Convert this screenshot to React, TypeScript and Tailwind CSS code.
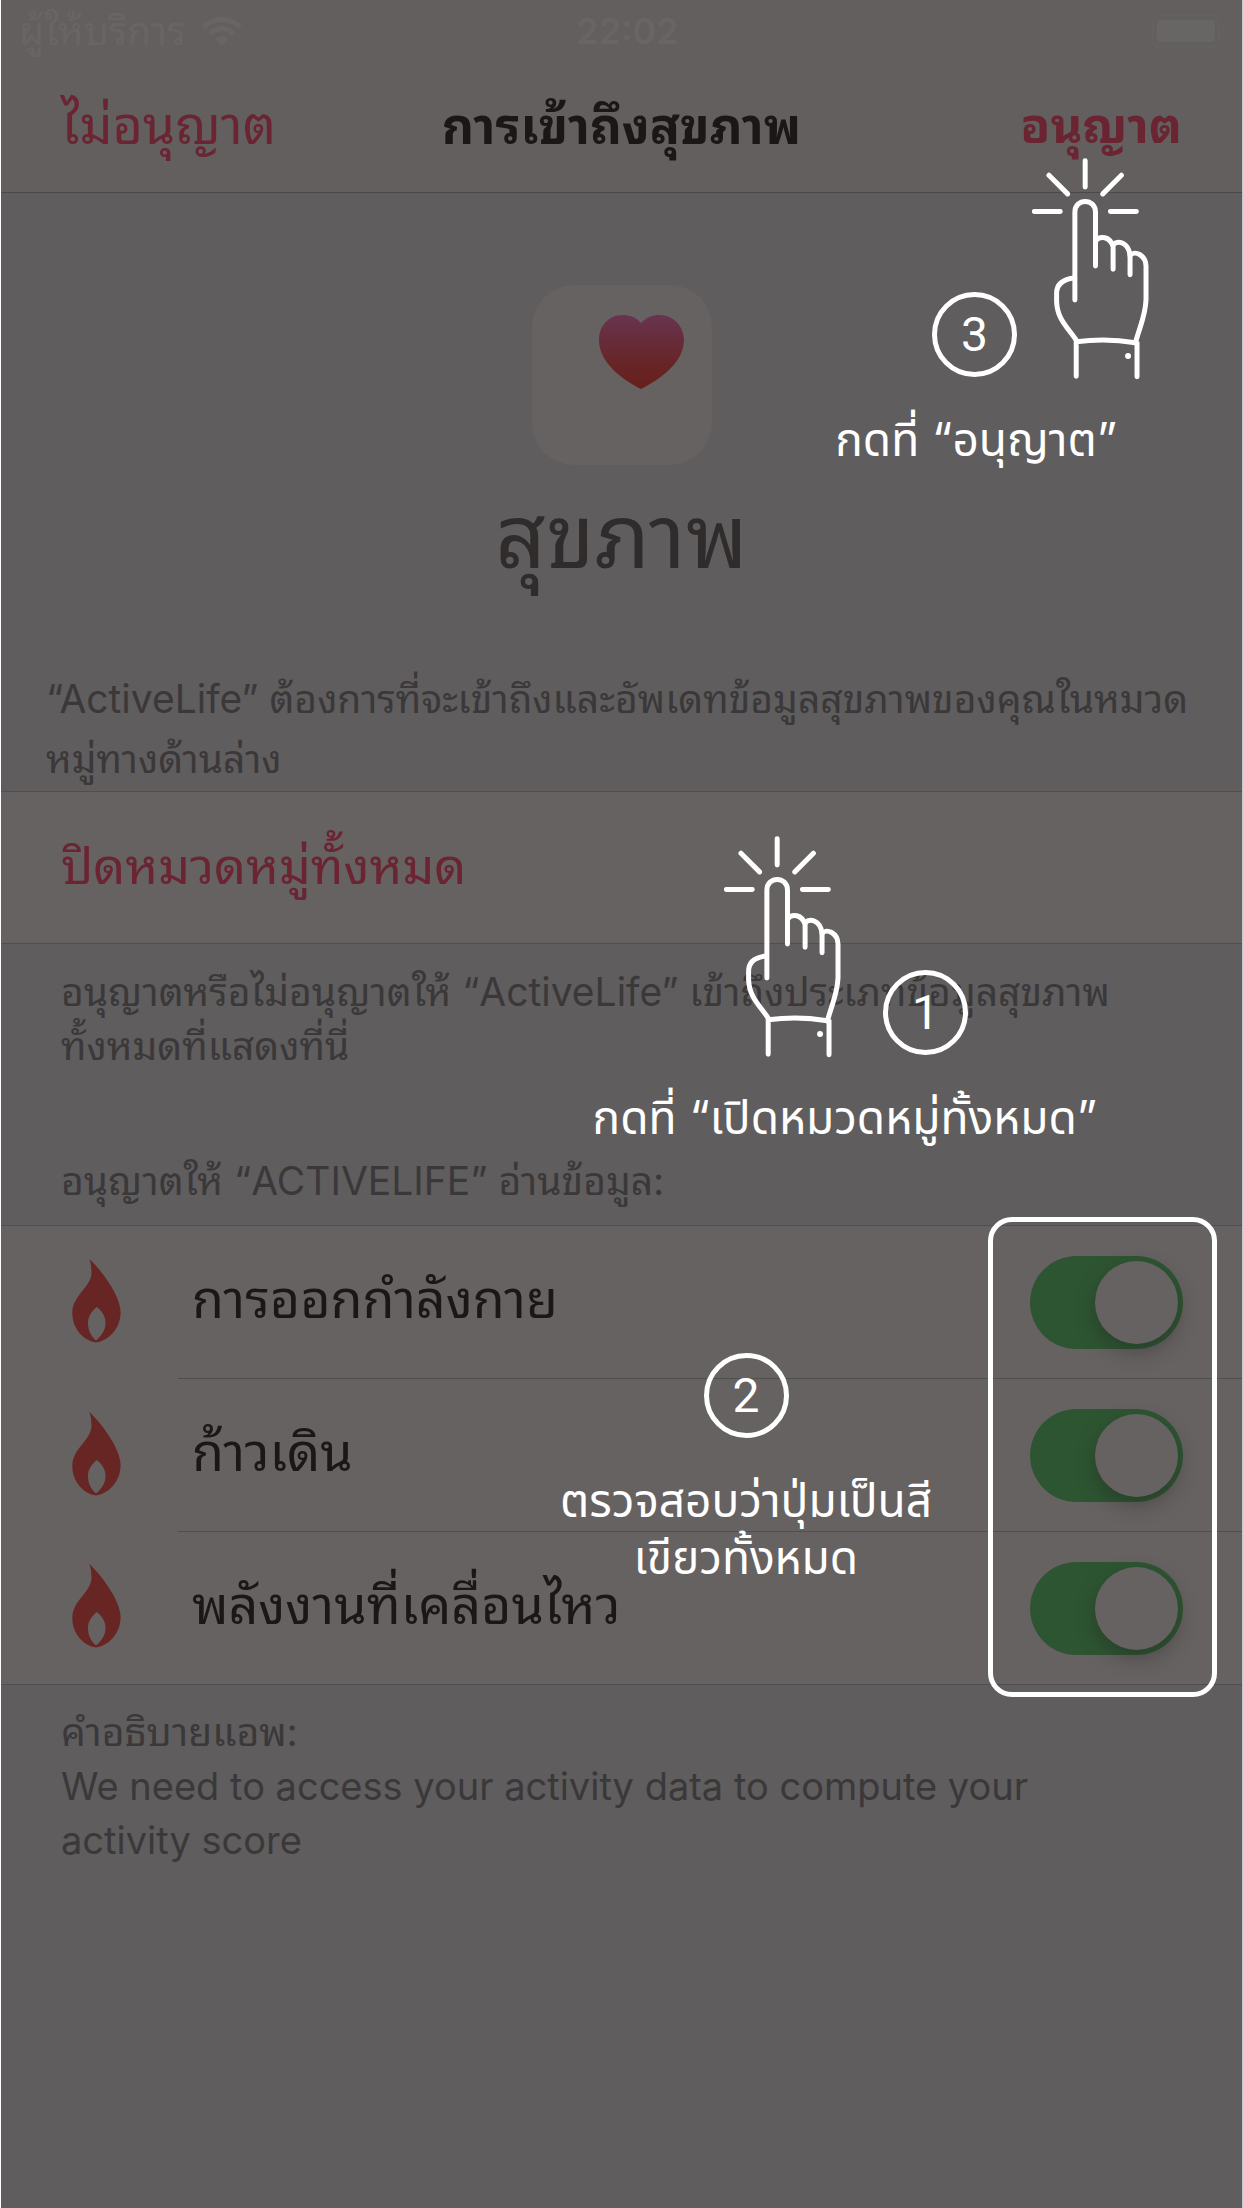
import React, { useId, useState } from 'react';

function TapHand({ className }: { className: string }) {
  return (
    <svg
      viewBox="636 84 352 666"
      className={`pointer-events-none absolute h-[222px] w-[117px] ${className}`}
      fill="none"
      stroke="white"
      strokeWidth="15"
      strokeLinecap="round"
      aria-hidden="true"
    >
      <path d="M796 91V170M687 135L743 191M905 135L849 191M643 244H721M872 244H950" />
      <path d="M765 510V246C765 203 827 203 827 246V408" />
      <path d="M828 332C840 316 871 318 880 350V418" />
      <path d="M880 344C894 330 926 336 931 376V434" />
      <path d="M931 376C945 360 978 374 979 408V510C977 560 960 590 947 640" />
      <path d="M762 444C730 448 710 462 710 490V515C712 570 745 594 771 634" />
      <path d="M769 740V636Q860 624 947 639L952 641V741" />
      <circle cx="925" cy="679" r="9" fill="white" stroke="none" />
    </svg>
  );
}

function StepNumber({ n }: { n: number }) {
  return (
    <span className="flex size-[85px] items-center justify-center rounded-full border-[5px] border-white font-['Roboto','Liberation_Sans',sans-serif] text-[48px] leading-none text-white">
      {n}
    </span>
  );
}

function Flame() {
  return (
    <svg viewBox="0 0 49 84" className="h-[84px] w-[49px] shrink-0" aria-hidden="true">
      <path
        fill="#672624"
        fillRule="evenodd"
        d="M17.5 0C32 14 48.6 38 48.6 53C48.6 70 36 82 24 83.5C12 82 0.3 70 0.3 54C0.3 36 20 28 19.5 13Q19.5 6 17.5 0ZM24 81.5C29 77 33.5 72 33.5 64C33.5 57 30 52 24.7 48C20 52 16 57 16 64C16 72 19 77 24 81.5Z"
      />
    </svg>
  );
}

function CategoryRow({ label, last = false }: { label: string; last?: boolean }) {
  const id = useId();
  const [on, setOn] = useState(true);
  return (
    <li className="flex items-stretch pl-[71px]">
      <span className="flex w-[106px] items-center pb-1">
        <Flame />
      </span>
      <div
        className={`flex flex-1 items-center justify-between pr-[59px] pl-[14px] ${
          last ? 'h-[152px]' : 'h-[153px] border-b border-[#504e4f]'
        }`}
      >
        <label htmlFor={id} className="pb-1 text-[52px] leading-[70px] text-[#1b1716]">
          {label}
        </label>
        <input
          id={id}
          type="checkbox"
          role="switch"
          checked={on}
          onChange={(e) => setOn(e.target.checked)}
          className="h-[93px] w-[153px] shrink-0 appearance-none rounded-full bg-[#504e4f] p-[5px] before:block before:size-[83px] before:rounded-full before:bg-[#666261] before:shadow-[0_8px_20px_rgba(30,25,30,0.35)] checked:bg-[#2e5532] checked:before:ml-[60px]"
        />
      </div>
    </li>
  );
}

export default function App() {
  return (
    <main className="min-h-screen overflow-hidden border-x border-l-white border-r-[#c9c8c8] bg-[#5f5d5e] font-['Inter','Noto_Sans_Thai_Looped','Loma','Noto_Sans_Thai',sans-serif] text-[39px] text-[#3b3839]">
      <header className="relative border-b border-[#4a4848] bg-[#635f5e]">
        <div className="grid h-[62px] grid-cols-3 items-center pr-[14px] pl-[18px] text-[#686565]">
          <div className="flex items-center gap-4">
            <span className="text-[39px] leading-[60px]">ผู้ให้บริการ</span>
            <svg viewBox="0 0 40 30" className="h-[30px] w-10" aria-hidden="true">
              <path d="M2 11C12 1 28 1 38 11M8 18C15 11 25 11 32 18" fill="none" stroke="currentColor" strokeWidth="5" />
              <path d="M13 23Q20 17 27 23L20 30Z" fill="currentColor" />
            </svg>
          </div>
          <span className="pl-2 text-center text-[36px] leading-[60px] font-semibold">22:02</span>
          <svg viewBox="0 0 76 34" className="h-[34px] w-[76px] justify-self-end" aria-hidden="true">
            <rect x="1" y="1" width="66" height="32" rx="6" fill="none" stroke="currentColor" strokeOpacity="0.4" strokeWidth="2" />
            <rect x="5" y="6" width="58" height="22" rx="3" fill="currentColor" />
            <path d="M71 12Q76 17 71 22Z" fill="currentColor" fillOpacity="0.4" />
          </svg>
        </div>
        <div className="grid h-[130px] grid-cols-[1fr_auto_1fr] items-center px-[60px] pb-[2px] text-[50px] leading-[70px]">
          <button type="button" className="justify-self-start text-[52px] text-[#6a2432]">
            ไม่อนุญาต
          </button>
          <h1 className="font-bold text-[#1b1716]">การเข้าถึงสุขภาพ</h1>
          <button type="button" className="justify-self-end text-[49px] font-bold text-[#6a2432]">
            อนุญาต
          </button>
        </div>
        <TapHand className="top-[158px] right-[93px] z-10" />
        <div className="absolute top-[292px] right-[225px] z-10">
          <StepNumber n={3} />
        </div>
        <p className="absolute top-[404px] right-[125px] z-10 font-['Inter','Noto_Sans_Thai',sans-serif] text-[46px] leading-[70px] whitespace-nowrap text-white">
          กดที่ “อนุญาต”
        </p>
      </header>

      <section className="flex flex-col items-center pt-[92px]">
        <div className="size-[180px] rounded-[42px] bg-[#666261]">
          <svg viewBox="0 0 180 180" className="size-full" aria-hidden="true">
            <defs>
              <linearGradient id="heart" x1="0" y1="0" x2="0" y2="1">
                <stop offset="0" stopColor="#68344f" />
                <stop offset="0.65" stopColor="#672527" />
                <stop offset="1" stopColor="#681f1a" />
              </linearGradient>
            </defs>
            <path
              fill="url(#heart)"
              d="M109 38C104 32 98 30 90 30C77 30 67 41 67 55C67 78 91 95 109 104C127 95 152 78 152 55C152 41 141 30 128 30C120 30 115 32 109 38Z"
            />
          </svg>
        </div>
        <h2 className="mt-[15px] text-[88px] leading-[112px] text-[#302c2b]">สุขภาพ</h2>
      </section>

      <p className="mt-[77px] h-[122px] px-[45px] leading-[60px] whitespace-nowrap">
        “ActiveLife” ต้องการที่จะเข้าถึงและอัพเดทข้อมูลสุขภาพของคุณในหมวด
        <br />
        หมู่ทางด้านล่าง
      </p>

      <section className="relative border-y border-[#504e4f] bg-[#666261]">
        <button type="button" className="block h-[151px] w-full px-[60px] pb-1 text-left text-[50px] leading-[70px] text-[#6a2432]">
          ปิดหมวดหมู่ทั้งหมด
        </button>
        <TapHand className="top-[44px] right-[401px] z-10" />
        <div className="absolute top-[178px] right-[274px] z-10">
          <StepNumber n={1} />
        </div>
        <p className="absolute top-[290px] right-[145px] z-10 font-['Inter','Noto_Sans_Thai',sans-serif] text-[46px] leading-[70px] whitespace-nowrap text-white">
          กดที่ “เปิดหมวดหมู่ทั้งหมด”
        </p>
      </section>

      <p className="px-[60px] pt-[21px] leading-[54px] whitespace-nowrap">
        อนุญาตหรือไม่อนุญาตให้ “ActiveLife” เข้าถึงประเภทข้อมูลสุขภาพ
        <br />
        ทั้งหมดที่แสดงที่นี่
      </p>

      <h3 className="mt-[81px] h-[71px] px-[60px] leading-[54px]">อนุญาตให้ “ACTIVELIFE” อ่านข้อมูล:</h3>

      <section className="relative border-y border-[#504e4f] bg-[#666261]">
        <ul>
          <CategoryRow label="การออกกำลังกาย" />
          <CategoryRow label="ก้าวเดิน" />
          <CategoryRow label="พลังงานที่เคลื่อนไหว" last />
        </ul>
        <div className="pointer-events-none absolute top-[-9px] right-[25px] h-[480px] w-[229px] rounded-3xl border-[5px] border-white" />
        <div className="pointer-events-none absolute top-[127px] right-[308px] flex w-[376px] flex-col items-center">
          <StepNumber n={2} />
          <p className="mt-[34px] text-center font-['Inter','Noto_Sans_Thai',sans-serif] text-[46px] leading-[57px] whitespace-nowrap text-white">
            ตรวจสอบว่าปุ่มเป็นสี
            <br />
            เขียวทั้งหมด
          </p>
        </div>
      </section>

      <footer className="px-[60px] pt-[20px] pb-12 leading-[54px]">
        <p>คำอธิบายแอพ:</p>
        <p className="text-[38px]">
          We need to access your activity data to compute your
          <br />
          activity score
        </p>
      </footer>
    </main>
  );
}
